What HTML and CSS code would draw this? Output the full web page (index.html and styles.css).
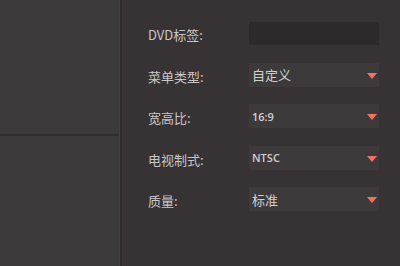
FILE: index.html
```html
<!DOCTYPE html>
<html lang="zh">
<head>
<meta charset="utf-8">
<link rel="stylesheet" href="styles.css">
</head>
<body>
<div class="app">
  <div class="side">
    <div class="side-top"></div>
    <div class="side-bottom"></div>
  </div>
  <div class="divider"></div>
  <div class="main">
    <div class="row">
      <span class="label">DVD标签:</span>
      <div class="field input"></div>
    </div>
    <div class="row">
      <span class="label">菜单类型:</span>
      <div class="field select"><span class="val">自定义</span><span class="arrow"></span></div>
    </div>
    <div class="row">
      <span class="label">宽高比:</span>
      <div class="field select"><span class="val latin">16:9</span><span class="arrow"></span></div>
    </div>
    <div class="row">
      <span class="label">电视制式:</span>
      <div class="field select"><span class="val latin">NTSC</span><span class="arrow"></span></div>
    </div>
    <div class="row">
      <span class="label">质量:</span>
      <div class="field select"><span class="val">标准</span><span class="arrow"></span></div>
    </div>
  </div>
</div>
</body>
</html>
```
FILE: styles.css
```css
html, body {
  margin: 0;
  padding: 0;
  width: 400px;
  height: 266px;
  overflow: hidden;
  background: #373334;
  font-family: "Noto Sans CJK SC", "Noto Sans", sans-serif;
}
.app {
  display: flex;
  width: 400px;
  height: 266px;
}
.side {
  width: 119px;
  display: flex;
  flex-direction: column;
  background: #3d3a3b;
}
.side-top {
  height: 134px;
  border-bottom: 2px solid #332f30;
}
.side-bottom {
  flex: 1;
}
.divider {
  width: 4px;
  background: linear-gradient(to right, #454243 0, #454243 1px, #2f2b2c 1px, #2f2b2c 3px, #3a3637 3px);
}
.main {
  flex: 1;
  display: flex;
  flex-direction: column;
  padding: 21px 0 0 25px;
  gap: 17.5px;
}
.row {
  display: flex;
  align-items: center;
  height: 24px;
}
.label {
  width: 101px;
  color: #c9c7c8;
  font-size: 13px;
  line-height: 24px;
  padding-top: 4px;
}
.field {
  width: 130px;
  height: 24px;
  box-sizing: border-box;
  display: flex;
  align-items: center;
  justify-content: space-between;
}
.input {
  background: #2e2a2b;
  height: 23px;
}
.select {
  background: #3e3a3b;
  padding: 0 2px 0 3px;
}
.val {
  color: #d2d0d1;
  font-size: 13px;
}
.val.latin {
  font-family: "Open Sans", "Noto Sans", sans-serif;
  font-size: 11px;
  font-weight: 600;
}
.arrow {
  width: 0;
  height: 0;
  border-left: 5px solid transparent;
  border-right: 5px solid transparent;
  border-top: 6px solid #f3725d;
  margin-top: 2px;
}
```
